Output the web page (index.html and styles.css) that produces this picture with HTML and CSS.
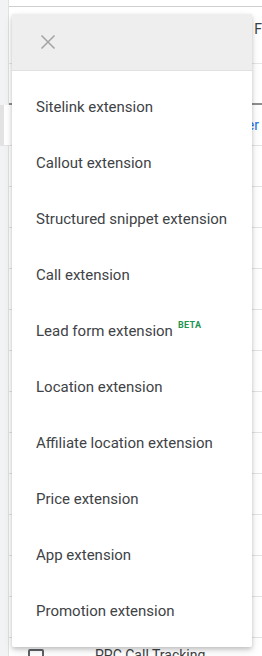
FILE: index.html
```
<!DOCTYPE html>
<html>
<head>
<meta charset="utf-8">
<link rel="stylesheet" href="styles.css">
</head>
<body>
<div class="page">
  <div class="sidebar"></div>
  <div class="main">
    <div class="topbar"></div>
    <div class="row row-head1"><span class="col-f">F</span></div>
    <div class="row row-head2"></div>
    <div class="row data hl"><span class="link">er</span></div>
    <div class="row data"></div>
    <div class="row data"></div>
    <div class="row data"></div>
    <div class="row data"></div>
    <div class="row data"></div>
    <div class="row data"></div>
    <div class="row data"></div>
    <div class="row data"></div>
    <div class="row data"></div>
    <div class="row data"></div>
    <div class="row data"></div>
    <div class="row data"></div>
    <div class="row last"><span class="checkbox"></span><span class="ppc">PPC Call Tracking</span></div>
  </div>
</div>

<div class="menu">
  <div class="menu-head">
    <svg class="close" width="24" height="24" viewBox="0 0 24 24"><path d="M5.5 5.5L18.5 18.5M18.5 5.5L5.5 18.5" stroke="#a3a3a3" stroke-width="1.5" fill="none"/></svg>
  </div>
  <ul class="menu-list">
    <li>Sitelink extension</li>
    <li>Callout extension</li>
    <li>Structured snippet extension</li>
    <li>Call extension</li>
    <li>Lead form extension<span class="beta">BETA</span></li>
    <li>Location extension</li>
    <li>Affiliate location extension</li>
    <li>Price extension</li>
    <li>App extension</li>
    <li>Promotion extension</li>
  </ul>
</div>
</body>
</html>
```
FILE: styles.css
```
html, body {
  margin: 0;
  padding: 0;
}
body {
  width: 262px;
  height: 656px;
  overflow: hidden;
  position: relative;
  background: #ffffff;
  font-family: Roboto, "Liberation Sans", Arial, sans-serif;
}
.page {
  display: flex;
  height: 656px;
}
.sidebar {
  width: 8px;
  flex: none;
  background: #f1f3f4;
  border-right: 1px solid #dfe1e3;
}
.main {
  flex: 1;
  display: flex;
  flex-direction: column;
  min-width: 0;
}
.topbar {
  height: 6px;
  border-bottom: 1px solid #cfcfcf;
  flex: none;
}
.row {
  flex: none;
  display: flex;
  align-items: center;
  position: relative;
}
.row-head1 {
  height: 56px;
  border-bottom: 1px solid #e6e6e6;
  justify-content: flex-end;
}
.col-f {
  font-size: 14px;
  color: #3c4043;
  margin-top: -12px;
  margin-right: 0;
}
.row-head2 {
  height: 39px;
  border-bottom: 2px solid #8e8e8e;
}
.data {
  height: 40px;
  border-bottom: 1px solid #e3e3e3;
  justify-content: flex-end;
}
.hl {
  background: linear-gradient(to right, #e2e2e2 0, #e2e2e2 4px, #ffffff 4px);
  margin-left: -9px;
  padding-left: 9px;
}
.link {
  font-size: 14px;
  color: #1a73e8;
  white-space: nowrap;
  margin-right: 3px;
}
.last {
  height: 20px;
  align-items: flex-start;
  padding-top: 11px;
}
.checkbox {
  width: 12px;
  height: 12px;
  border: 2px solid #5f6368;
  border-radius: 2px;
  margin-left: 19px;
  flex: none;
}
.ppc {
  font-size: 14px;
  color: #3c4043;
  margin-left: 51px;
  margin-top: -2px;
}

.menu {
  position: absolute;
  left: 12px;
  top: 14px;
  width: 240px;
  background: #ffffff;
  box-shadow: 0 2px 4px rgba(0,0,0,0.18), 0 4px 10px rgba(0,0,0,0.1);
  border-radius: 2px;
}
.menu-head {
  height: 56px;
  background: #eeeeee;
  border-bottom: 1px solid #e0e0e0;
  display: flex;
  align-items: center;
  padding-left: 24px;
}
.close {
  display: block;
}
.menu-list {
  list-style: none;
  margin: 0;
  padding: 8px 0;
}
.menu-list li {
  height: 56px;
  display: flex;
  align-items: center;
  padding-left: 24px;
  font-size: 15px;
  color: #404346;
  white-space: nowrap;
}
.beta {
  font-size: 9px;
  font-weight: 700;
  color: #1e9450;
  letter-spacing: 0.4px;
  margin-left: 5px;
  margin-top: -13px;
}
```
